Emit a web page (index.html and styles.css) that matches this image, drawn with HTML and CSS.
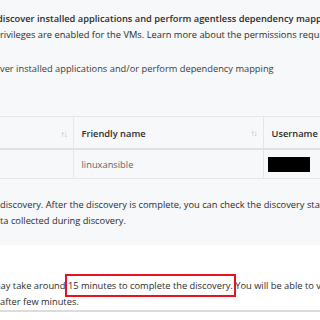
FILE: index.html
```html
<!DOCTYPE html>
<html>

<head>
    <meta charset="UTF-8">
    <title>Discovery credentials</title>
    <link rel="stylesheet" href="styles.css">
</head>

<body>
    <!-- Seccion de credenciales -->
    <div class="panel">
        <p class="title"><span class="cut">d</span>iscover installed applications and perform agentless dependency mapping</p>
        <p class="desc">rivileges are enabled for the VMs. Learn more about the permissions required</p>
        <p class="toggle">ver installed applications and/or perform dependency mapping</p>

        <!-- Tabla de credenciales -->
        <table class="grid">
            <tr>
                <th class="col-source"><span class="sort">&#8593;&#8595;</span></th>
                <th class="col-name">Friendly name <span class="sort">&#8593;&#8595;</span></th>
                <th class="col-user">Username</th>
            </tr>
            <tr>
                <td></td>
                <td class="muted">linuxansible</td>
                <td><span class="redacted"></span></td>
            </tr>
        </table>

        <p class="info">discovery. After the discovery is complete, you can check the discovery status<br>ta collected during discovery.</p>
    </div>

    <!-- Nota final -->
    <div class="note">
        <p><span class="cut-m">m</span>ay take around <span class="mark">15 minutes to complete the discovery.</span> You will be able to view<br>after few minutes.</p>
    </div>
</body>

</html>
```

FILE: styles.css
```css
* {
    box-sizing: border-box;
}

body {
    margin: 0;
    width: 320px;
    height: 320px;
    overflow: hidden;
    font-family: "Open Sans", "Noto Sans", sans-serif;
    font-size: 9.3px;
    color: #2b2b2b;
    background-color: #ffffff;
}

p {
    margin: 0;
    white-space: nowrap;
}

.panel {
    background-color: #f7f8fa;
    padding-top: 11px;
    height: 245px;
}

.title {
    font-weight: 600;
    line-height: 16px;
}

.cut {
    margin-left: -3px;
}

.cut-m {
    margin-left: -8px;
}

.desc {
    line-height: 16px;
}

.toggle {
    margin-top: 18px;
    line-height: 16px;
    color: #3b3a39;
}

.grid {
    width: 330px;
    margin-top: 39px;
    border-collapse: collapse;
    border-top: 1px solid #e6e6e8;
}

.grid th,
.grid td {
    padding: 0 8px;
    text-align: left;
    white-space: nowrap;
}

.grid th {
    height: 32px;
    padding-top: 3px;
    font-weight: 600;
    border-bottom: 2px solid #e1e1e3;
}

.grid td {
    height: 30px;
    padding-top: 2px;
    border-bottom: 1px solid #e6e6e8;
}

.grid th + th,
.grid td + td {
    border-left: 1px solid #e6e6e8;
}

.col-source {
    width: 73px;
}

.col-name {
    width: 190px;
}

.sort {
    float: right;
    font-size: 8px;
    font-weight: 400;
    color: #b3b3b3;
    letter-spacing: -1px;
    margin-right: -2px;
}

.muted {
    color: #5f6368;
}

.redacted {
    display: block;
    width: 42px;
    height: 15px;
    background-color: #000000;
    margin-left: -4px;
    margin-top: -1px;
}

.info {
    margin-top: 18px;
    line-height: 16px;
}

.note {
    padding-top: 33px;
    height: 67px;
    border-bottom: 2px solid #dcdcdc;
}

.note p {
    line-height: 16px;
}

.mark {
    padding: 3px 1px;
    margin: 0 -1px;
    outline: 2px solid #e81123;
}
```
